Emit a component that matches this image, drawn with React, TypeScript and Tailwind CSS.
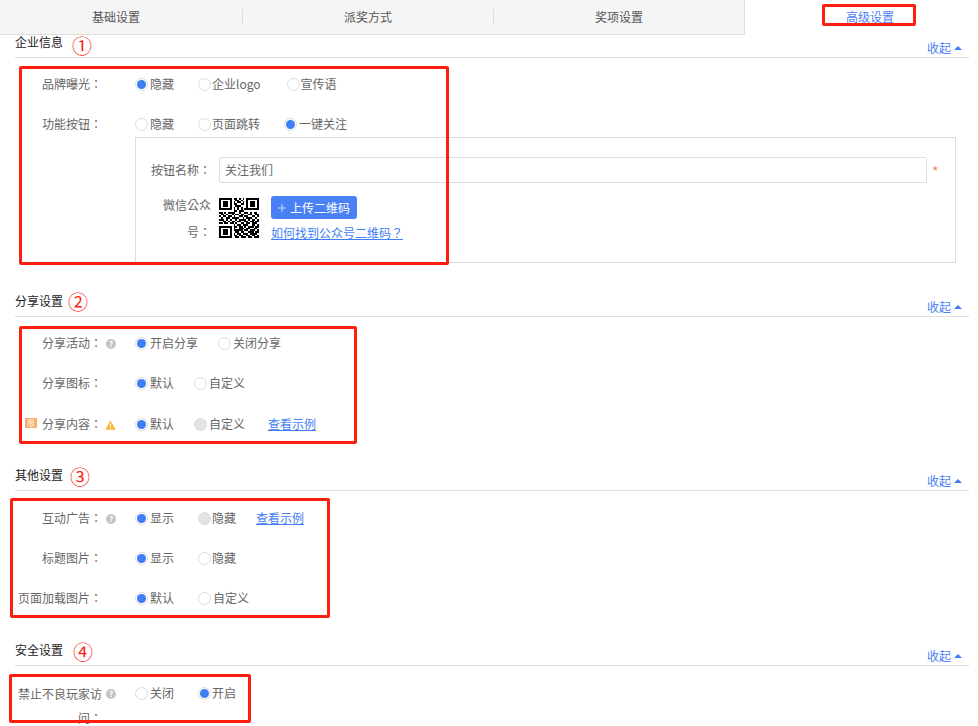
import type { ReactNode } from "react";

const font = "font-['Noto_Sans_CJK_SC',sans-serif]";

const QR = [
  "1111111011010101111111",
  "1000001001101001000001",
  "1011101010110101011101",
  "1011101011001101011101",
  "1011101001110001011101",
  "1000001010101001000001",
  "1111111010101011111111",
  "0000000011011100000000",
  "1101011110010011010110",
  "0110100101101100110011",
  "1011011010011011001101",
  "0100110111100101110010",
  "1110101001011110101101",
  "0011010110110011011011",
  "1101101101001101101110",
  "0000000010110111001101",
  "1111111011011010111011",
  "1000001010011101100110",
  "1011101011111011011101",
  "1011101001101100111011",
  "1011101010110111011110",
  "1000001011011001101101",
  "1111111001101110110111",
];

function QrCode() {
  return (
    <svg width="40" height="40" viewBox="0 0 22 23" preserveAspectRatio="none" shapeRendering="crispEdges">
      {QR.map((row, y) =>
        row.split("").map((c, x) => (c === "1" ? <rect key={`${x}-${y}`} x={x} y={y} width="1" height="1" fill="#000" /> : null)),
      )}
    </svg>
  );
}

function Radio({ state }: { state: "on" | "off" | "disabled" }) {
  if (state === "on")
    return (
      <span className="w-[13px] h-[13px] rounded-full border border-[#dcdcdc] bg-white flex items-center justify-center shrink-0">
        <span className="w-[9px] h-[9px] rounded-full bg-[#3f7ef5]" />
      </span>
    );
  if (state === "disabled")
    return <span className="w-[13px] h-[13px] rounded-full border border-[#dcdcdc] bg-[#e3e3e3] shrink-0" />;
  return <span className="w-[13px] h-[13px] rounded-full border border-[#dcdcdc] bg-white shrink-0" />;
}

function Opt({ state, text, cls, tight }: { state: "on" | "off" | "disabled"; text: string; cls?: string; tight?: boolean }) {
  return (
    <span className={`flex items-center ${tight ? "gap-[1px]" : "gap-[2px]"} ${cls ?? ""}`}>
      <Radio state={state} />
      <span>{text}</span>
    </span>
  );
}

function Colon({ char = "：" }: { char?: string }) {
  return <span className="font-['Noto_Sans_CJK_TC',sans-serif]">{char}</span>;
}

function Help({ cls }: { cls: string }) {
  return (
    <span className={`absolute left-[106px] w-[10px] h-[10px] rounded-full bg-[#c4c4c4] text-white text-[8px] leading-[10px] text-center font-bold ${cls}`}>
      ?
    </span>
  );
}

function Row({ label, children, icon, cls }: { label: string; children: ReactNode; icon?: ReactNode; cls?: string }) {
  return (
    <div className={`relative flex items-center h-[20px] text-[12px] text-[#666] ${cls ?? ""}`}>
      <div className="w-[102px] pl-[15px] text-right shrink-0 whitespace-nowrap">
        {label}
        <Colon />
      </div>
      {icon}
      <div className="ml-[33px] flex items-center">{children}</div>
    </div>
  );
}

function Header({ title }: { title: string }) {
  return (
    <div className="ml-[15px] h-[23px] flex items-center justify-between border-b border-[#ddd] text-[12px]">
      <span className="text-[#222] -mt-[8px]">{title}</span>
      <span className="flex items-center gap-[3px] text-[#4a80f5] mr-[7px] mt-[3px]">
        收起
        <span className="w-0 h-0 border-x-[4px] border-x-transparent border-b-[4px] border-b-[#3f7ef5]" />
      </span>
    </div>
  );
}

function Tab({ text, cls }: { text: string; cls: string }) {
  return <div className={`flex items-center justify-center ${cls}`}>{text}</div>;
}

function Box({ cls }: { cls: string }) {
  return <div className={`absolute border-[3px] border-[#fe1e10] rounded-[2px] pointer-events-none ${cls}`} />;
}

function Num({ text, cls }: { text: string; cls: string }) {
  return <div className={`absolute text-[#fe1e10] text-[20px] leading-[20px] ${font} ${cls}`}>{text}</div>;
}

function Link({ children }: { children: ReactNode }) {
  return <span className="text-[#3f7ef5] underline">{children}</span>;
}

export default function App() {
  return (
    <div className={`relative w-[978px] h-[726px] overflow-hidden bg-white text-[12px] ${font}`}>
      <div className="w-[978px] flex text-[#555]">
        <div className="w-[745px] h-[35px] shrink-0 flex items-center bg-[#f5f5f5] border-b border-r border-[#ddd]">
          <Tab text="基础设置" cls="w-[243px] pr-[10px] h-[16px] border-r border-[#ddd]" />
          <Tab text="派奖方式" cls="w-[251px] h-[16px] border-r border-[#ddd]" />
          <Tab text="奖项设置" cls="w-[250px] h-[16px]" />
        </div>
        <Tab text="高级设置" cls="w-[250px] h-[34px] shrink-0 text-[#4a80f5]" />
      </div>

      <div className="w-[969px]">
        <Header title="企业信息" />
        <div className="pt-[16px]">
          <Row label="品牌曝光">
            <Opt state="on" text="隐藏" cls="mr-[24px]" />
            <Opt state="off" text="企业logo" cls="mr-[26px]" tight />
            <Opt state="off" text="宣传语" tight />
          </Row>
          <Row label="功能按钮" cls="mt-[20px]">
            <Opt state="off" text="隐藏" cls="mr-[24px]" />
            <Opt state="off" text="页面跳转" cls="mr-[24px]" tight />
            <Opt state="on" text="一键关注" />
          </Row>
          <div className="ml-[135px] mt-[3px] w-[821px] h-[126px] border border-[#ddd] pl-[15px] pt-[19px] text-[#666]">
            <div className="flex items-center h-[26px]">
              <span className="w-[68px] shrink-0">
                按钮名称
                <Colon />
              </span>
              <div className="w-[708px] h-[26px] border border-[#ddd] rounded-[2px] flex items-center px-[5px]">关注我们</div>
              <span className="ml-[5px] mt-[2px] text-[14px] text-[#f58a6a]">*</span>
            </div>
            <div className="flex mt-[13px]">
              <div className="w-[60px] pl-[12px] text-right leading-[27px] mt-[-5px] shrink-0 font-['Noto_Sans_CJK_TC',sans-serif]">
                微信公众号：
              </div>
              <div className="ml-[8px] mt-[2px]">
                <QrCode />
              </div>
              <div className="ml-[12px]">
                <div className="w-[86px] h-[23px] bg-[#4a80f5] rounded-[3px] text-white flex items-center pl-[7px] gap-[4px]">
                  <svg width="8" height="8" viewBox="0 0 8 8" className="shrink-0">
                    <path d="M4 0V8M0 4H8" stroke="#c9dafc" strokeWidth="1" fill="none" />
                  </svg>
                  上传二维码
                </div>
                <div className="mt-[5px]">
                  <Link>
                    如何找到公众号二维码
                    <Colon char="？" />
                  </Link>
                </div>
              </div>
            </div>
          </div>
        </div>

        <div className="mt-[31px]">
          <Header title="分享设置" />
        </div>
        <div className="pt-[16px]">
          <Row label="分享活动" icon={<Help cls="top-[6px]" />}>
            <Opt state="on" text="开启分享" cls="mr-[20px]" />
            <Opt state="off" text="关闭分享" />
          </Row>
          <Row label="分享图标" cls="mt-[20px]">
            <Opt state="on" text="默认" cls="mr-[20px]" />
            <Opt state="off" text="自定义" />
          </Row>
          <Row
            label="分享内容"
            cls="mt-[21px]"
            icon={
              <>
                <span className="absolute left-[25px] top-[4px] w-[12px] h-[10px] bg-[#f7a95c] rounded-[1px] text-white text-[8px] leading-[10px] text-center">限</span>
                <svg className="absolute left-[105px] top-[6px]" width="11" height="10" viewBox="0 0 11 10">
                  <path d="M5.5 0.5 L10.8 9.7 H0.2 Z" fill="#f8b63f" />
                  <rect x="5" y="3.5" width="1" height="3.4" fill="#fff" />
                  <rect x="5" y="7.6" width="1" height="1" fill="#fff" />
                </svg>
              </>
            }
          >
            <Opt state="on" text="默认" cls="mr-[20px]" />
            <Opt state="disabled" text="自定义" cls="mr-[23px]" />
            <Link>查看示例</Link>
          </Row>
        </div>

        <div className="mt-[34px]">
          <Header title="其他设置" />
        </div>
        <div className="pt-[17px]">
          <Row label="互动广告" icon={<Help cls="top-[6px]" />}>
            <Opt state="on" text="显示" cls="mr-[24px]" />
            <Opt state="disabled" text="隐藏" cls="mr-[20px]" tight />
            <Link>查看示例</Link>
          </Row>
          <Row label="标题图片" cls="mt-[20px]">
            <Opt state="on" text="显示" cls="mr-[24px]" />
            <Opt state="off" text="隐藏" tight />
          </Row>
          <Row label="页面加载图片" cls="mt-[20px]">
            <Opt state="on" text="默认" cls="mr-[24px]" />
            <Opt state="off" text="自定义" />
          </Row>
        </div>

        <div className="mt-[35px]">
          <Header title="安全设置" />
        </div>
        <div className="relative pt-[17px] text-[#666]">
          <div className="flex items-start">
            <div className="w-[102px] pl-[17px] text-right leading-[24px] mt-[-1px] shrink-0 font-['Noto_Sans_CJK_TC',sans-serif]">
              禁止不良玩家访问：
            </div>
            <Help cls="top-[23px]" />
            <div className="ml-[33px] flex items-center h-[20px]">
              <Opt state="off" text="关闭" cls="mr-[24px]" />
              <Opt state="on" text="开启" tight />
            </div>
          </div>
        </div>
      </div>

      <Box cls="left-[822px] top-[4px] w-[94px] h-[22px]" />
      <Box cls="left-[19px] top-[66px] w-[430px] h-[199px]" />
      <Box cls="left-[19px] top-[326px] w-[338px] h-[118px]" />
      <Box cls="left-[10px] top-[498px] w-[320px] h-[120px]" />
      <Box cls="left-[9px] top-[674px] w-[242px] h-[49px]" />

      <Num text="①" cls="left-[72px] top-[36px]" />
      <Num text="②" cls="left-[68px] top-[292px]" />
      <Num text="③" cls="left-[70px] top-[467px]" />
      <Num text="④" cls="left-[73px] top-[642px]" />
    </div>
  );
}
